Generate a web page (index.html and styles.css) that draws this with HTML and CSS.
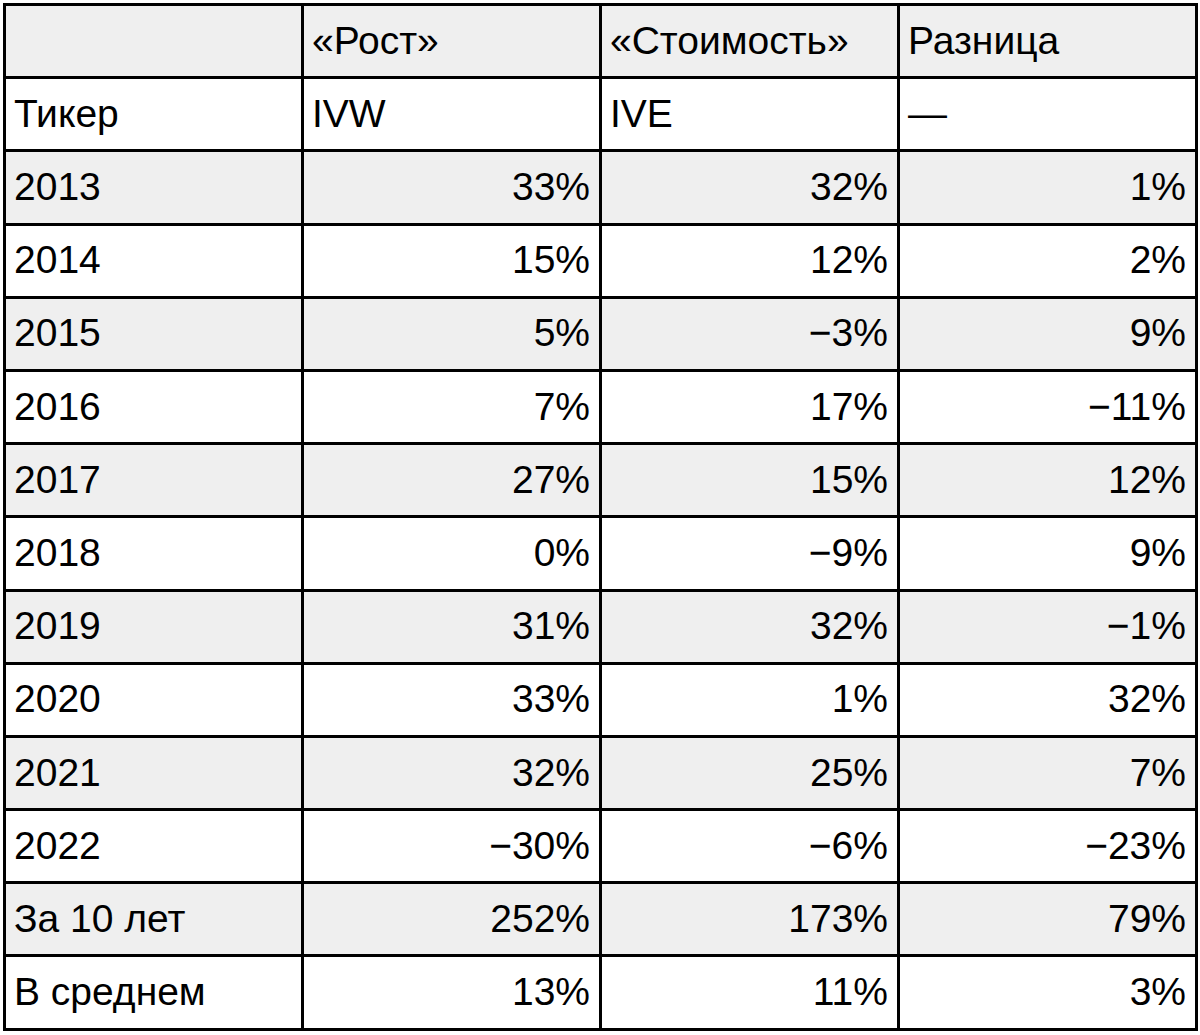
FILE: index.html
```html
<!DOCTYPE html>
<html lang="ru">
<head>
<meta charset="utf-8">
<title>Рост и стоимость</title>
<link rel="stylesheet" href="styles.css">
</head>
<body>
<table class="grid">
  <colgroup><col><col><col><col></colgroup>
  <tbody>
    <tr class="alt"><td></td><td>«Рост»</td><td>«Стоимость»</td><td>Разница</td></tr>
    <tr><td>Тикер</td><td>IVW</td><td>IVE</td><td>—</td></tr>
    <tr class="alt num"><td>2013</td><td>33%</td><td>32%</td><td>1%</td></tr>
    <tr class="num"><td>2014</td><td>15%</td><td>12%</td><td>2%</td></tr>
    <tr class="alt num"><td>2015</td><td>5%</td><td>−3%</td><td>9%</td></tr>
    <tr class="num"><td>2016</td><td>7%</td><td>17%</td><td>−11%</td></tr>
    <tr class="alt num"><td>2017</td><td>27%</td><td>15%</td><td>12%</td></tr>
    <tr class="num"><td>2018</td><td>0%</td><td>−9%</td><td>9%</td></tr>
    <tr class="alt num"><td>2019</td><td>31%</td><td>32%</td><td>−1%</td></tr>
    <tr class="num"><td>2020</td><td>33%</td><td>1%</td><td>32%</td></tr>
    <tr class="alt num"><td>2021</td><td>32%</td><td>25%</td><td>7%</td></tr>
    <tr class="num"><td>2022</td><td>−30%</td><td>−6%</td><td>−23%</td></tr>
    <tr class="alt num"><td>За 10 лет</td><td>252%</td><td>173%</td><td>79%</td></tr>
    <tr class="num"><td>В среднем</td><td>13%</td><td>11%</td><td>3%</td></tr>
  </tbody>
</table>
</body>
</html>
```
FILE: styles.css
```css
html, body {
  margin: 0;
  padding: 0;
  background: #ffffff;
}

body {
  font-family: "Liberation Sans", Arial, Helvetica, sans-serif;
  color: #000000;
}

.grid {
  margin: 3px 0 0 3px;
  width: 1195px;
  table-layout: fixed;
  border-collapse: separate;
  border-spacing: 0;
  border-top: 3px solid #000;
  border-left: 3px solid #000;
  font-size: 39px;
  line-height: 1.15;
}

.grid td {
  height: 70.2px;
  padding: 0 9px 0 8px;
  border-right: 3px solid #000;
  border-bottom: 3px solid #000;
  vertical-align: middle;
  text-align: left;
  white-space: nowrap;
  background: #ffffff;
}

.grid tr.alt td {
  background: #efefef;
}

.grid tr.num td {
  text-align: right;
}

.grid tr.num td:first-child {
  text-align: left;
}
```
